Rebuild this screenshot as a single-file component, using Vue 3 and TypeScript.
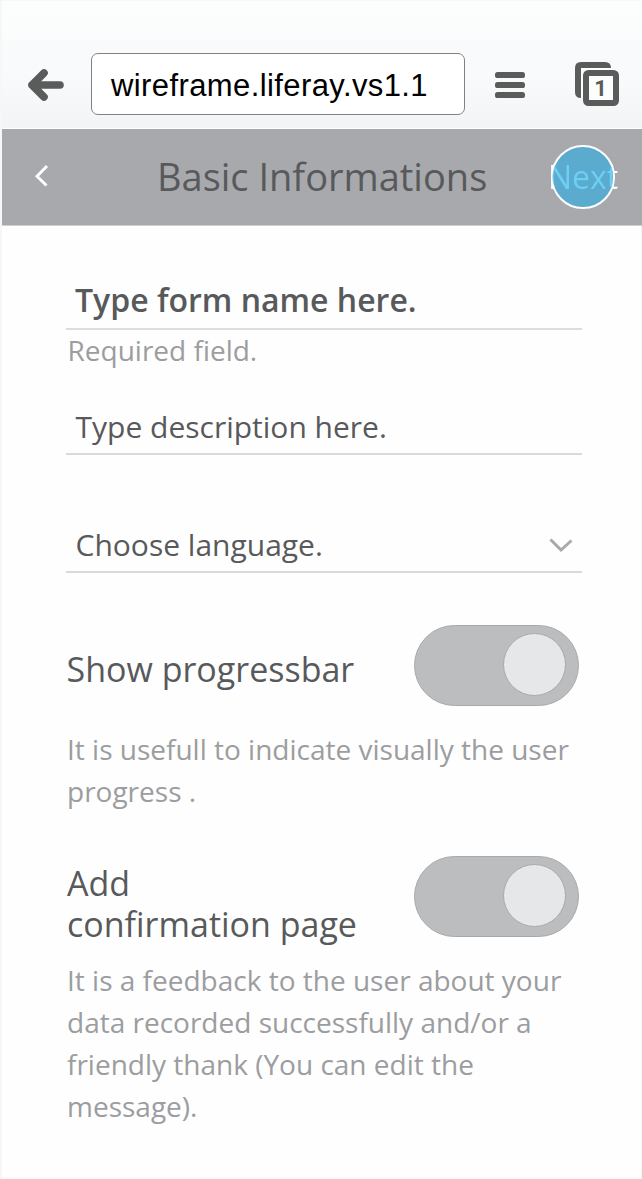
<script setup lang="ts">
interface ToggleOption {
  id: string
  lines: string[]
  help: string[]
}

const options: ToggleOption[] = [
  {
    id: 'progress',
    lines: ['Show progressbar'],
    help: ['It is usefull to indicate visually the user', 'progress .'],
  },
  {
    id: 'confirm',
    lines: ['Add', 'confirmation page'],
    help: [
      'It is a feedback to the user about your',
      'data recorded successfully and/or a',
      'friendly thank (You can edit the',
      'message).',
    ],
  },
]
</script>

<template>
  <main class="screen">
    <header class="browser">
      <svg class="back" width="38" height="34" viewBox="0 0 38 34">
        <path d="M17 5 L5 17 L17 29 M5 17 H33" fill="none" stroke="#5a5b5b" stroke-width="7.6" stroke-linecap="round" stroke-linejoin="round" />
      </svg>
      <div class="address"><span class="url">wireframe.liferay.vs1.1</span></div>
      <svg class="menu" width="30" height="26" viewBox="0 0 30 26">
        <rect y="0" width="30" height="6" rx="2.6" fill="#5a5b5b" />
        <rect y="10" width="30" height="6" rx="2.6" fill="#5a5b5b" />
        <rect y="20" width="30" height="6" rx="2.6" fill="#5a5b5b" />
      </svg>
      <svg class="tabs" width="44" height="44" viewBox="0 0 44 44">
        <path d="M6 36 Q0 36 0 30 V6 Q0 0 6 0 H30 Q36 0 36 6 H6 Z" fill="#5a5b5b" />
        <path d="M7 36 V7 H36" fill="none" stroke="#fff" stroke-width="2" />
        <rect x="11" y="11" width="30" height="30" rx="2.500" fill="#fcfdfd" stroke="#5a5b5b" stroke-width="6" />
        <text x="25.500" y="34" text-anchor="middle" class="count">1</text>
      </svg>
    </header>

    <nav class="bar">
      <svg class="chevron" width="16" height="24" viewBox="0 0 16 24">
        <path d="M13 2 L3 12.200 L12.500 21.500" fill="none" stroke="#fff" stroke-width="2.900" />
      </svg>
      <h1 class="title">Basic Informations</h1>
      <div class="next">
        <span class="dot"></span>
        <span class="next-label">Next</span>
      </div>
    </nav>

    <form class="form">
      <div class="field name"><span>Type form name here.</span></div>
      <p class="required">Required field.</p>
      <div class="field description"><span>Type description here.</span></div>
      <div class="field language">
        <span>Choose language.</span>
        <svg class="caret" width="24" height="16" viewBox="0 0 24 16">
          <path d="M1.500 1.500 L12 12 L22.500 2.500" fill="none" stroke="#a7a9ac" stroke-width="3" />
        </svg>
      </div>

      <section v-for="o in options" :key="o.id" :class="['option', o.id]">
        <div class="row">
          <div class="label"><span v-for="l in o.lines" :key="l" class="line">{{ l }}</span></div>
          <div class="toggle"><span class="knob"></span></div>
        </div>
        <p class="help"><span v-for="h in o.help" :key="h" class="line">{{ h }}</span></p>
      </section>
    </form>
  </main>
</template>

<style>
body {
  margin: 0;
  background: #fff;
}
</style>

<style scoped>
.screen {
  box-sizing: border-box;
  width: 642px;
  height: 1179px;
  overflow: hidden;
  border: 1px solid #f7f7f8;
  border-width: 1px 0 1px 2px;
  background: linear-gradient(#f5f5f6, #f5f5f6) right top / 1px 100% no-repeat #fefefe;
  color: #58595b;
  font-family: "Open Sans", "Noto Sans", sans-serif;
  white-space: nowrap;
}
.browser {
  box-sizing: border-box;
  display: flex;
  height: 128px;
  padding-left: 25px;
  background: linear-gradient(#fcfdfd 0, #fbfdfc 38px, #f9fafb 40px, #f9fafb 75px, #f3f4f6 127px);
  border-bottom: 1px solid #fff;
}
.back {
  margin-top: 67px;
}
.address {
  box-sizing: border-box;
  width: 374px;
  height: 62px;
  margin: 52px 0 0 26px;
  padding-left: 19px;
  border: 1px solid #808183;
  border-radius: 7px;
  background: #fff;
}
.url {
  color: #000;
  font: 31px/64px "Liberation Sans", Arial, sans-serif;
  letter-spacing: 0.4px;
}
.menu {
  margin: 71px 0 0 30px;
}
.tabs {
  margin: 61px 0 0 50px;
}
.count {
  fill: #5a5b5b;
  font: bold 22px Roboto, sans-serif;
}
.bar {
  box-sizing: border-box;
  display: flex;
  height: 97px;
  padding-left: 32px;
  background: #a7a9ac;
  border-bottom: 1px solid #d0d0d3;
}
.chevron {
  margin-top: 35px;
}
.title {
  width: 330px;
  margin: 0 0 0 107px;
  font-size: 38px;
  font-weight: 400;
  line-height: 95px;
}
.next {
  display: grid;
  width: 72px;
  height: 64px;
  margin: 16px 0 0 62px;
}
.dot,
.next-label {
  grid-area: 1 / 1;
}
.dot {
  box-sizing: border-box;
  width: 64px;
  height: 64px;
  margin-left: 2px;
  border: 2px solid #fff;
  border-radius: 50%;
  background: #5aabcd;
}
.next-label {
  width: 72px;
  height: 64px;
  margin-left: -1px;
  font-size: 32px;
  line-height: 64px;
  color: transparent;
  background: radial-gradient(circle at 35px 32px, #6dcff6 30px, #fff 31px);
  -webkit-background-clip: text;
  background-clip: text;
}
.form {
  width: 516px;
  padding: 52px 0 0 64px;
}
.field {
  box-sizing: border-box;
  display: flex;
  justify-content: space-between;
  padding: 0 9.500px;
  line-height: 44px;
  font-size: 30px;
}
.name {
  height: 52px;
  padding-left: 9px;
  font-size: 32px;
  font-weight: 600;
  line-height: 43px;
  border-bottom: 2px solid #dcddde;
}
.required {
  height: 40px;
  margin: 0;
  padding-left: 1.500px;
  color: #9b9da0;
  font-size: 28px;
  line-height: 40px;
}
.description {
  height: 50px;
  margin-top: 35px;
  border-bottom: 2px solid #d9dadb;
}
.language {
  height: 50px;
  margin-top: 68px;
  border-bottom: 2px solid #d9dadb;
}
.caret {
  margin-top: 15px;
}
.option {
  padding-left: 1px;
}
.progress {
  margin-top: 52px;
}
.confirm {
  margin-top: 44px;
}
.row {
  display: flex;
  justify-content: space-between;
  height: 82px;
  padding-right: 3px;
}
.label {
  font-size: 34px;
  line-height: 41px;
}
.progress .label {
  margin-top: 24px;
  margin-left: -0.500px;
}
.confirm .label {
  margin-top: 7px;
}
.line {
  display: block;
}
.toggle {
  box-sizing: border-box;
  display: flex;
  width: 165px;
  height: 81px;
  padding: 7px 0 0 88px;
  border: 1px solid #a7a9ac;
  border-radius: 41px;
  background: #bcbdbf;
}
.knob {
  box-sizing: border-box;
  width: 63px;
  height: 63px;
  border: 1px solid #a7a9ac;
  border-radius: 50%;
  background: #e6e7e9;
}
.help {
  margin: 21px 0 0;
  color: #9b9da0;
  font-size: 28px;
  line-height: 42px;
}
</style>
